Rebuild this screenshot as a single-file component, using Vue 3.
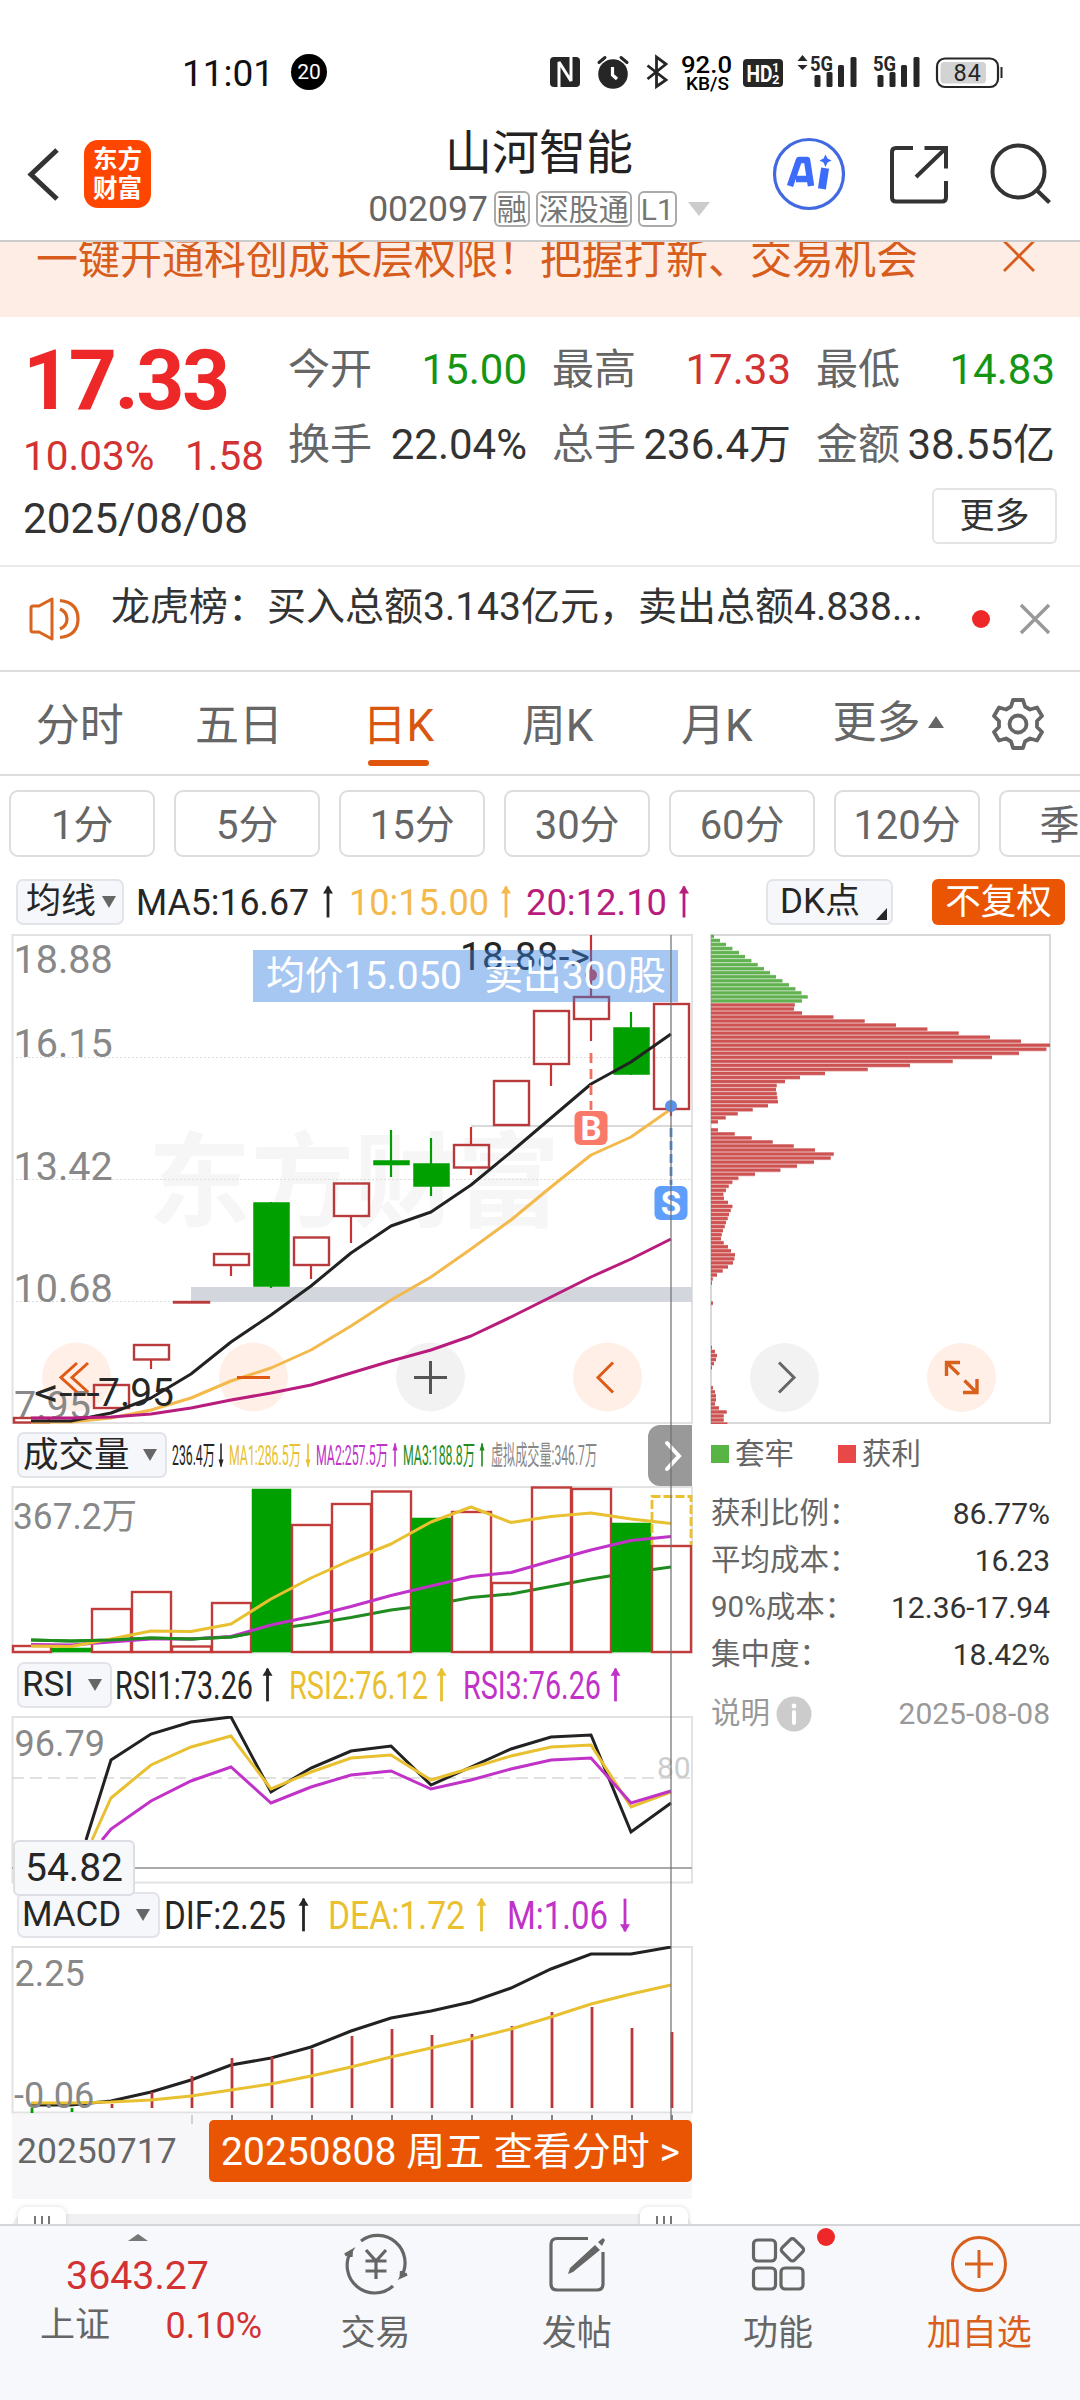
<script setup>
import { h } from "vue";

const stats = [
  { label: "今开", value: "15.00", tone: "down" },
  { label: "最高", value: "17.33", tone: "up" },
  { label: "最低", value: "14.83", tone: "down" },
  { label: "换手", value: "22.04%" },
  { label: "总手", value: "236.4万" },
  { label: "金额", value: "38.55亿" },
];

const tabs = ["分时", "五日", "日K", "周K", "月K"];
const periods = ["1分", "5分", "15分", "30分", "60分", "120分", "季K"];

const black = "#262626";
const gold = "#e8c030";
const purple = "#c032c8";
const green = "#1e8c1e";

const maValues = [
  { x: 136, w: 173, text: "MA5:16.67", color: black, arrow: 328, up: true },
  { x: 349, w: 140, text: "10:15.00", color: "#f3b94c", arrow: 506, up: true },
  { x: 526, w: 141, text: "20:12.10", color: "#b81c7c", arrow: 684, up: true },
];
const volValues = [
  { x: 172, w: 43, text: "236.4万", color: black, arrow: 221, up: false },
  { x: 229, w: 72, text: "MA1:286.5万", color: gold, arrow: 308, up: false },
  { x: 316, w: 72, text: "MA2:257.5万", color: purple, arrow: 395, up: true },
  { x: 403, w: 72, text: "MA3:188.8万", color: green, arrow: 482, up: true },
  { x: 491, w: 106, text: "虚拟成交量:346.7万", color: "#888" },
];
const rsiValues = [
  { x: 115, w: 138, text: "RSI1:73.26", color: black, arrow: 267.5, up: true },
  { x: 289, w: 139, text: "RSI2:76.12", color: gold, arrow: 441.5, up: true },
  { x: 463, w: 138, text: "RSI3:76.26", color: purple, arrow: 615.5, up: true },
];
const macdValues = [
  { x: 164, w: 122, text: "DIF:2.25", color: black, arrow: 303.5, up: true },
  { x: 328, w: 137, text: "DEA:1.72", color: gold, arrow: 481.5, up: true },
  { x: 507, w: 101, text: "M:1.06", color: purple, arrow: 625, up: false },
];

// row of indicator numbers, squeezed to the width they have
function Readout({ items, from, size = 36, head = 5 }) {
  const half = size * 0.43;
  return h(
    "svg",
    { width: 700 - from, height: 62, viewBox: `${from} -31 ${700 - from} 62` },
    items.flatMap((it) => {
      const nodes = [
        h(
          "text",
          {
            x: it.x,
            y: size * 0.37,
            fill: it.color,
            "font-size": size,
            textLength: it.w,
            lengthAdjust: "spacingAndGlyphs",
          },
          it.text
        ),
      ];
      if (it.arrow) {
        const s = it.up ? 1 : -1;
        const tip = -half * s;
        nodes.push(
          h("path", {
            d: `M${it.arrow} ${half}V${-half}`,
            stroke: it.color,
            "stroke-width": head > 4 ? 2.8 : 1.6,
          }),
          h("path", {
            d: `M${it.arrow - head} ${tip + 7 * s}L${it.arrow} ${tip - s}L${it.arrow + head} ${tip + 7 * s}Z`,
            fill: it.color,
          })
        );
      }
      return nodes;
    })
  );
}
Readout.props = ["items", "from", "size", "head"];

const cx = (i) => 31 + i * 40;
const line = (ys, from = 0) => ys.map((y, i) => `${cx(i + from)},${y}`).join(" ");

const candles = [
  { i: 0, top: 1418, bottom: 1422.5, high: 1418, low: 1422 },
  { i: 2, top: 1385, bottom: 1408, high: 1385, low: 1408 },
  { i: 3, top: 1345, bottom: 1359.5, high: 1345, low: 1369 },
  { i: 4, top: 1302, bottom: 1302.5, high: 1302, low: 1302 },
  { i: 5, top: 1254, bottom: 1265, high: 1254, low: 1276 },
  { i: 6, top: 1203, bottom: 1286, high: 1202, low: 1288, down: true },
  { i: 7, top: 1237.5, bottom: 1265, high: 1237, low: 1279 },
  { i: 8, top: 1183.5, bottom: 1216, high: 1183, low: 1243 },
  { i: 9, top: 1161, bottom: 1164.5, high: 1130, low: 1177, down: true },
  { i: 10, top: 1164, bottom: 1186, high: 1138, low: 1196, down: true },
  { i: 11, top: 1145, bottom: 1167.5, high: 1127, low: 1175 },
  { i: 12, top: 1081, bottom: 1125, high: 1081, low: 1125 },
  { i: 13, top: 1011, bottom: 1064, high: 1011, low: 1086 },
  { i: 14, top: 997, bottom: 1019, high: 935, low: 1041 },
  { i: 15, top: 1028, bottom: 1074, high: 1012, low: 1075, down: true },
  { i: 16, top: 1004, bottom: 1109, high: 1004, low: 1116 },
];

const ma5 = line([1421, 1421, 1413, 1398, 1374, 1342, 1315, 1286, 1253, 1226, 1212, 1185, 1152, 1118, 1084, 1062, 1034]);
const ma10 = line([1422, 1422, 1418, 1410, 1398, 1381, 1368, 1350, 1326, 1300, 1277, 1249, 1220, 1187, 1155, 1137, 1109]);
const ma20 = line([1418, 1418, 1417, 1414, 1408, 1400, 1393, 1385, 1373, 1361, 1350, 1336, 1317, 1297, 1277, 1259, 1239]);

const volTops = [1646, 1648, 1609, 1592, 1646.5, 1603, 1489, 1525, 1504, 1491.5, 1518, 1512, 1583, 1487.5, 1489, 1523, 1546];
const volDown = [1, 6, 10, 15];
const vol1 = line([1646, 1646.5, 1639, 1631, 1631.5, 1624, 1599, 1578, 1560, 1544, 1522, 1507, 1522.5, 1516.5, 1513, 1519, 1523.5]);
const vol2 = line([1644.5, 1645, 1642, 1639, 1639, 1636.5, 1625, 1616.5, 1606.5, 1595.5, 1586, 1576.5, 1572.5, 1561, 1550, 1540.5, 1536.5]);
const vol3 = line([1640, 1641, 1640, 1638, 1639, 1637, 1629.5, 1624, 1617.5, 1610, 1605, 1597.5, 1594, 1586.5, 1579, 1572.5, 1567]);

const rsi1 = "86,1840 " + line([1760, 1734, 1722, 1717, 1792, 1768, 1751, 1746, 1785, 1767, 1749, 1737, 1735, 1832, 1803], 2);
const rsi2 = "92,1840 " + line([1798, 1765, 1747, 1736, 1789, 1772, 1758, 1755, 1780, 1768, 1756, 1747, 1745, 1807, 1792], 2);
const rsi3 = "102,1840 " + line([1829, 1801, 1781, 1767, 1803, 1787, 1775, 1771, 1789, 1780, 1769, 1760, 1758, 1803, 1791], 2);

const dif = line([2105, 2105, 2101, 2092, 2080, 2065, 2058, 2047, 2031, 2018, 2011, 2002, 1988, 1969, 1954, 1954, 1947]);
const dea = line([2103, 2103, 2102, 2100, 2096, 2090, 2084, 2076, 2067, 2057, 2048, 2039, 2029, 2017, 2004, 1994, 1985]);
const macdTops = [2113, 2112, 2104, 2092, 2076, 2058, 2057, 2049, 2036, 2029, 2035, 2034, 2026, 2012, 2007, 2028, 2032];

// widths of the cost distribution bars, in thirds of a pixel
const chips = [
  9, 27, 45, 64, 84, 102, 121, 140, 159, 177, 195, 214, 234, 253, 271, 290, 273,
  251, 249, 273, 367, 461, 555, 649, 743, 837, 930, 1017, 1006, 924, 843, 725, 597, 470, 342, 267, 222,
  197, 195, 197, 199, 201, 171, 125, 80, 44, 21, 0, 21, 71, 122, 185, 248, 312, 368, 359, 309, 258, 208,
  132, 82, 64, 53, 45, 37, 39, 51, 64, 59, 54, 50, 45, 41, 36, 32, 30, 38, 51, 60, 72, 70, 66, 51, 35, 18, 5, 3,
  0, 0, 0, 0, 6, 0, 0, 0, 0, 0, 0, 0, 0, 0, 0, 3, 12, 18, 15, 9, 3, 0, 0, 0, 0, 6, 12, 15, 15, 12, 24, 47, 38, 38, 49,
];

const costs = [
  { label: "获利比例：", value: "86.77%" },
  { label: "平均成本：", value: "16.23" },
  { label: "90%成本：", value: "12.36-17.94" },
  { label: "集中度：", value: "18.42%" },
];
</script>

<template>
  <div class="page">
    <div class="status">
      <span class="time">11:01</span>
      <span class="count">20</span>
      <svg class="tray" width="460" height="44" viewBox="545 50 460 44">
        <rect x="550" y="57" width="30" height="30" rx="4" fill="#262626" />
        <path d="M555.500 60.500V84M555.500 61.500H559.500L570.500 81.500M574.500 83V59M570 82.500H566.500" fill="none" stroke="none" />
        <path d="M559 87V62L571 81V57" fill="none" stroke="#fff" stroke-width="3" stroke-linejoin="bevel" />
        <circle cx="613" cy="74" r="14.800" fill="#262626" />
        <path d="M599 62.500l6-5M627 62.500l-6-5" stroke="#262626" stroke-width="3" stroke-linecap="round" />
        <path d="M612.500 67v8l4.500 4" fill="none" stroke="#fff" stroke-width="3.200" />
        <path d="M647.500 65.500L666 80L656.500 86.500V57L666 64L647.500 79" fill="none" stroke="#262626" stroke-width="2.800" />
        <text x="681" y="73" font-size="24" font-weight="500" textLength="51" lengthAdjust="spacingAndGlyphs">92.0</text>
        <text x="686" y="90" font-size="19" font-weight="500" textLength="43" lengthAdjust="spacingAndGlyphs">KB/S</text>
        <rect x="743" y="59" width="40" height="28" rx="4" fill="#262626" />
        <text x="746.500" y="82" font-size="24" font-weight="700" fill="#fff" textLength="26" lengthAdjust="spacingAndGlyphs">HD</text>
        <text x="772" y="72" font-size="13" font-weight="700" fill="#fff">1</text>
        <text x="772" y="84" font-size="13" font-weight="700" fill="#fff">2</text>
        <path d="M797.500 61l5-6 5 6zM797.500 65l5 5 5-5z" fill="#262626" />
        <g v-for="sx in [0, 63]" :key="sx" fill="#262626">
          <text :x="810 + sx" y="70.500" font-size="21" font-weight="700" textLength="23" lengthAdjust="spacingAndGlyphs">5G</text>
          <rect :x="814.500 + sx" y="75" width="6" height="12" rx="1.500" />
          <rect :x="826.500 + sx" y="72" width="6" height="15" rx="1.500" />
          <rect :x="838 + sx" y="65" width="6" height="22" rx="1.500" />
          <rect :x="850.500 + sx" y="57" width="6" height="30" rx="1.500" />
        </g>
        <rect x="937" y="58.500" width="61" height="28.500" rx="8" fill="#fff" stroke="#262626" stroke-width="2.200" />
        <rect x="940.500" y="62" width="45.500" height="21.500" rx="4" fill="#d3d3d3" />
        <path d="M1001.500 67v11" stroke="#262626" stroke-width="2" />
        <text x="953.500" y="81" font-size="23.500" fill="#262626" textLength="27.500">84</text>
      </svg>
    </div>

    <header class="header">
      <div class="left">
        <svg width="34" height="60" viewBox="26 144 34 60">
          <path d="M57 150L31 174.500L57 199" fill="none" stroke="#333" stroke-width="5" />
        </svg>
        <div class="logo"><span>东方</span><span>财富</span></div>
      </div>
      <div class="title">
        <div class="name">山河智能</div>
        <div class="code">
          <span>002097</span>
          <em>融</em>
          <em>深股通</em>
          <em>L1</em>
          <i></i>
        </div>
      </div>
      <div class="right">
        <svg width="74" height="74" viewBox="771 137 74 74">
          <circle cx="808" cy="174" r="34.500" fill="#fff" stroke="#4169e1" stroke-width="3.200" />
          <path d="M789 186L798 160H806L810 186M795 179H807" fill="none" stroke="#3d6bfa" stroke-width="6.500" stroke-linejoin="round" />
          <path d="M823.500 172l-2 13" stroke="#3d6bfa" stroke-width="8" stroke-linecap="square" />
          <path d="M824.500 154.500l2 4 4 2-4 2-2 4.500-2-4.500-4-2 4-2z" fill="#3d6bfa" />
        </svg>
        <svg width="60" height="60" viewBox="886 144 60 60">
          <path d="M911 148H894q-4 0-4 4V197.500q0 4 4 4H940q4 0 4-4V181" fill="none" stroke="#333" stroke-width="4" />
          <path d="M922.500 148H944V168.500M943 149L914 177" fill="none" stroke="#333" stroke-width="4" />
        </svg>
        <svg width="62" height="62" viewBox="990 143 62 62">
          <circle cx="1018.500" cy="171.500" r="26" fill="none" stroke="#333" stroke-width="4" />
          <path d="M1036.500 190L1049.500 202.500" stroke="#333" stroke-width="4.200" />
        </svg>
      </div>
    </header>

    <div class="banner">
      <span>一键开通科创成长层权限！把握打新、交易机会</span>
      <svg width="34" height="34" viewBox="0 0 34 34">
        <path d="M2 2L32 32M32 2L2 32" stroke="#d85c1c" stroke-width="2.800" />
      </svg>
    </div>

    <section class="quote">
      <div class="price">
        <b>17.33</b>
        <div class="change"><span>10.03%</span><span>1.58</span></div>
      </div>
      <div class="stats">
        <div v-for="s in stats" :key="s.label" class="stat">
          <label>{{ s.label }}</label>
          <span :class="s.tone">{{ s.value }}</span>
        </div>
      </div>
      <div class="date">2025/08/08</div>
      <div class="more">更多</div>
    </section>

    <div class="notice">
      <svg width="56" height="48" viewBox="27 594 56 48">
        <path d="M31 607q0-2 2-2h6l13-7V638l-13-7h-6q-2 0-2-2z" fill="none" stroke="#d8641e" stroke-width="3" stroke-linejoin="round" />
        <path d="M60 608q7 3 7 10t-7 10M60 599.500q18 2 18 18.500t-18 18.500" fill="none" stroke="#d8641e" stroke-width="3.200" />
      </svg>
      <p>龙虎榜：买入总额3.143亿元，卖出总额4.838...</p>
      <i></i>
      <svg width="32" height="32" viewBox="0 0 32 32">
        <path d="M2 2L30 30M30 2L2 30" stroke="#999" stroke-width="3.400" />
      </svg>
    </div>

    <nav class="tabs">
      <div v-for="t in tabs" :key="t" :class="['tab', { active: t === '日K' }]">{{ t }}</div>
      <div class="tab-more">更多<i></i></div>
      <svg width="54" height="54" viewBox="-27 -27 54 54">
        <path
          d="M-5-24H5L7-17.500 12-14.500 19-16.500 24-8 19-3V3L24 8 19 16.500 12 14.500 7 17.500 5 24H-5L-7 17.500-12 14.500-19 16.500-24 8-19 3V-3L-24-8-19-16.500-12-14.500-7-17.500Z"
          fill="none"
          stroke="#666"
          stroke-width="3.800"
          stroke-linejoin="round"
        />
        <circle r="8.500" fill="none" stroke="#666" stroke-width="3.800" />
      </svg>
    </nav>

    <div class="periods">
      <div v-for="p in periods" :key="p" class="period">{{ p }}</div>
    </div>

    <div class="indicator main">
      <div class="picker ma">均线<i></i></div>
      <Readout :items="maValues" :from="124" :size="36" />
      <div class="picker dk">DK点<u></u></div>
      <div class="adjust">不复权</div>
    </div>

    <div class="board">
      <div class="charts">
        <svg width="700" height="490" viewBox="0 934 700 490">
          <text class="mark" x="148" y="1219" textLength="412">东方财富</text>
          <path d="M12 1057.500H692M12 1179.500H692M12 1301.500H692" stroke="#ddd" stroke-dasharray="2 2" />
          <rect x="12.500" y="935" width="679.500" height="488" class="frame" />
          <rect x="191" y="1287" width="501" height="15" fill="#d3d6dc" />
          <path d="M471 1126H692" stroke="#ccc" stroke-width="1.500" />
          <g fill="#ffefe6">
            <circle cx="76.500" cy="1377" r="34.500" />
            <circle cx="253.500" cy="1377" r="34.500" />
            <circle cx="430.500" cy="1377" r="34.500" fill="#f2f2f2" />
            <circle cx="607.500" cy="1377" r="34.500" />
          </g>
          <g class="scale" font-size="39.500">
            <text x="13.500" y="973">18.88</text>
            <text x="13.500" y="1057">16.15</text>
            <text x="13.500" y="1180">13.42</text>
            <text x="13.500" y="1302">10.68</text>
            <text x="14" y="1419">7.95</text>
          </g>
          <g v-for="c in candles" :key="c.i">
            <path
              :d="`M${cx(c.i)} ${c.high}V${c.top}M${cx(c.i)} ${c.bottom}V${c.low}`"
              :stroke="c.down ? '#009c00' : '#c83232'"
              stroke-width="2.200"
            />
            <rect
              :x="cx(c.i) - 17"
              :y="c.top"
              width="35"
              :height="c.bottom - c.top"
              :fill="c.down ? '#00a000' : 'none'"
              :stroke="c.down ? '#00a000' : '#b93a3a'"
              :stroke-width="c.down ? 1.5 : 2.4"
            />
          </g>
          <g fill="none" stroke-width="3" stroke-linejoin="round">
            <polyline :points="ma10" stroke="#f3b94c" />
            <polyline :points="ma5" stroke="#222" />
            <polyline :points="ma20" stroke="#b81c7c" />
          </g>
          <g fill="none" stroke="#e05a14" stroke-width="3">
            <path d="M77 1363L61 1377.500L77 1392M88 1363L72 1377.500L88 1392" />
            <path d="M237 1377.500H270" />
            <path d="M414 1377.500H447M430.500 1361V1394" stroke="#555" />
            <path d="M613 1362.500L598 1377.500L613 1392.500" />
          </g>
          <text x="34" y="1406" font-size="39" :fill="black" textLength="66" lengthAdjust="spacingAndGlyphs">&lt;---</text>
          <text x="98" y="1406" font-size="39" :fill="black">7.95</text>
          <text x="460" y="970" font-size="38.500" :fill="black" textLength="130">18.88-&gt;</text>
          <circle cx="591" cy="975" r="6" fill="#e04040" />
          <rect x="253" y="950" width="425" height="52" fill="#3380e1" fill-opacity="0.44" />
          <g font-size="39" fill="#fff">
            <text x="266" y="989" textLength="196">均价15.050</text>
            <text x="484" y="989" textLength="182">卖出300股</text>
          </g>
          <path d="M591 1053V1110" stroke="#f0705f" stroke-width="2.800" stroke-dasharray="10 6" />
          <rect x="574.500" y="1111" width="33" height="34" rx="6" fill="#f97a68" />
          <text class="badge" x="591" y="1140">B</text>
          <path d="M671 1128V1185" stroke="#4f8fe8" stroke-width="2.800" stroke-dasharray="9 4" />
          <rect x="654.500" y="1186" width="33" height="34" rx="6" fill="#5f9efb" />
          <text class="badge" x="671" y="1215">S</text>
          <circle cx="671" cy="1106" r="6" fill="#5a93ea" />
        </svg>

        <div class="indicator">
          <div class="picker vol">成交量<i></i></div>
          <Readout :items="volValues" :from="167" :size="27" :head="2.5" />
        </div>
        <svg width="700" height="168" viewBox="0 1486 700 168">
          <rect x="12.500" y="1487" width="679.500" height="165.500" class="frame" />
          <text class="scale" x="13" y="1529" font-size="36.500" textLength="124" lengthAdjust="spacingAndGlyphs">367.2万</text>
          <polyline :points="vol3" fill="none" :stroke="green" stroke-width="3" />
          <rect
            v-for="(top, i) in volTops"
            :key="i"
            :x="i ? 12 + i * 40 : 13"
            :y="top"
            :width="i ? 39 : 38"
            :height="1652 - top"
            :fill="volDown.includes(i) ? '#00a000' : 'none'"
            :stroke="volDown.includes(i) ? '#00a000' : '#c23c3c'"
            :stroke-width="volDown.includes(i) ? 0.5 : 2.4"
          />
          <path d="M652 1545V1496.500H691V1545" fill="none" stroke="#e8c030" stroke-width="2.800" stroke-dasharray="9 3" />
          <g fill="none" stroke-width="3" stroke-linejoin="round">
            <polyline :points="vol2" :stroke="purple" />
            <polyline :points="vol1" :stroke="gold" />
            <path d="M31 1640L71 1641L111 1640L151 1638L191 1639L231 1637L250 1633.500" :stroke="green" />
          </g>
        </svg>

        <div class="indicator">
          <div class="picker rsi">RSI<i></i></div>
          <Readout :items="rsiValues" :from="112" :size="38" />
        </div>
        <svg width="700" height="168" viewBox="0 1716 700 168">
          <rect x="12.500" y="1717" width="679.500" height="165.500" class="frame" />
          <path d="M12 1778H692" stroke="#d8d8d8" stroke-width="1.500" stroke-dasharray="12 6" />
          <path d="M12 1868H692" stroke="#aaa" stroke-width="2" />
          <text class="scale" x="14.500" y="1756" font-size="36">96.79</text>
          <text x="657" y="1778" font-size="30" fill="#ccc">80</text>
          <g fill="none" stroke-width="3">
            <polyline :points="rsi1" stroke="#222" />
            <polyline :points="rsi2" :stroke="gold" />
            <polyline :points="rsi3" :stroke="purple" />
          </g>
        </svg>

        <div class="indicator">
          <div class="picker macd">MACD<i></i></div>
          <Readout :items="macdValues" :from="160" :size="38" />
        </div>
        <svg width="700" height="168" viewBox="0 1946 700 168">
          <rect x="12.500" y="1947" width="679.500" height="165.500" class="frame" />
          <polyline :points="dif" fill="none" stroke="#222" stroke-width="3" />
          <path
            v-for="(top, i) in macdTops"
            :key="i"
            :d="`M${cx(i) + 1} 2108V${top}`"
            :stroke="i < 2 ? '#009c00' : '#b93a3a'"
            stroke-width="2.800"
          />
          <polyline :points="dea" fill="none" :stroke="gold" stroke-width="3" />
          <g class="scale" font-size="36">
            <text x="14.500" y="1986">2.25</text>
            <text x="14" y="2108">-0.06</text>
          </g>
        </svg>

        <div class="axis">
          <span>20250717</span>
          <div class="day">20250808 周五 查看分时 &gt;</div>
          <svg width="520" height="9" viewBox="180 2115 520 9">
            <path v-for="i in 13" :key="i" :d="`M${cx(i + 3) + 1} 2115v${i > 1 ? 5 : 9}`" :stroke="i > 1 ? '#777' : '#ccc'" stroke-width="1.800" />
          </svg>
        </div>
        <div class="slider">
          <div class="handle"><i></i><i></i><i></i></div>
          <div class="handle"><i></i><i></i><i></i></div>
        </div>

        <div class="fold">
          <svg width="20" height="32" viewBox="0 0 20 32">
            <path d="M3 3L15 16L3 29" fill="none" stroke="#fff" stroke-width="4" stroke-linecap="round" />
          </svg>
        </div>
        <div class="cross"></div>
        <div class="level">54.82</div>
      </div>

      <aside class="chips">
        <svg width="380" height="490" viewBox="700 934 380 490">
          <rect x="711" y="935" width="339" height="488" fill="none" stroke="#ccc" stroke-width="1.500" />
          <g v-for="(w, i) in chips" :key="i" :fill="i < 17 ? '#62b150' : '#cd5252'">
            <rect x="711" :y="934.5 + i * 4.03" :width="w / 3" height="4" fill-opacity="0.5" />
            <rect x="711" :y="935 + i * 4.03" :width="w / 3" height="2.800" />
          </g>
          <circle cx="784.500" cy="1377.500" r="34.500" fill="#f2f2f2" />
          <path d="M779 1362.500L794 1377.500L779 1392.500" fill="none" stroke="#666" stroke-width="3" />
          <circle cx="961.500" cy="1377.500" r="34.500" fill="#ffefe6" />
          <path d="M960 1362.500H946.500V1376M947 1363L959 1374.500M963 1392.500H977V1379M976 1392L964.500 1380.500" fill="none" stroke="#d8601c" stroke-width="3.400" />
        </svg>
        <div class="legend">
          <span><i class="loss"></i>套牢</span>
          <span><i class="gain"></i>获利</span>
        </div>
        <div v-for="c in costs" :key="c.label" class="cost">
          <span>{{ c.label }}</span>
          <b>{{ c.value }}</b>
        </div>
        <div class="explain">
          <span>说明</span>
          <svg width="36" height="36" viewBox="0 0 36 36">
            <circle cx="18" cy="18" r="17.500" fill="#ccc" />
            <path d="M18 16v11" stroke="#fff" stroke-width="4" stroke-linecap="round" />
            <circle cx="18" cy="10" r="2.400" fill="#fff" />
          </svg>
          <b>2025-08-08</b>
        </div>
      </aside>
    </div>

    <footer class="footer">
      <div class="index">
        <i></i>
        <b>3643.27</b>
        <div><span>上证</span><em>0.10%</em></div>
      </div>
      <div class="item">
        <svg width="70" height="64" viewBox="-35 -32 70 64">
          <g fill="none" stroke="#666" stroke-width="3.200">
            <path d="M-15-23A27.500 27.500 0 0 1 25.500 12.500L31 10M25 13.500L25.500 7" />
            <path d="M17 22A27.500 27.500 0 0 1-25-12.500L-31-9M-24.500-14L-25-7" />
            <path d="M-10-14L0-3L10-14M-10.500-3H10.500M-10.500 7H10.500M0-3V15" />
          </g>
        </svg>
        <span>交易</span>
      </div>
      <div class="item">
        <svg width="70" height="64" viewBox="-35 -32 70 64">
          <path d="M11-25.500H-20q-6 0-6 6V20q0 6 6 6H20q6 0 6-6V-12" fill="none" stroke="#666" stroke-width="3.200" />
          <path d="M21-22l5-4 2 2-3 6zM18-19l5 5L-4 8l-5 2 2-6z" fill="#666" />
        </svg>
        <span>发帖</span>
      </div>
      <div class="item">
        <svg width="70" height="64" viewBox="-35 -32 70 64">
          <g fill="none" stroke="#666" stroke-width="3.200">
            <rect x="-24.500" y="-24" width="22" height="21" rx="4" />
            <rect x="-24.500" y="4" width="22" height="21" rx="4" />
            <rect x="3" y="4" width="22" height="21" rx="4" />
            <rect x="5.500" y="-23" width="17.500" height="17.500" rx="3" transform="rotate(45 14.250 -14)" />
          </g>
        </svg>
        <span>功能</span>
        <i class="dot"></i>
      </div>
      <div class="item add">
        <svg width="70" height="64" viewBox="-35 -32 70 64">
          <circle r="26.500" fill="none" stroke="#d8601c" stroke-width="3" />
          <path d="M-14 0H14M0-14V14" stroke="#d8601c" stroke-width="3" />
        </svg>
        <span>加自选</span>
      </div>
    </footer>
  </div>
</template>

<style>
body {
  margin: 0;
  background: #fff;
}
</style>

<style scoped>
.page {
  width: 1080px;
  height: 2400px;
  overflow: hidden;
  display: flex;
  flex-direction: column;
  background: #fff;
  color: #333;
  font-family: Roboto, "Noto Sans CJK SC", sans-serif;
  white-space: nowrap;
}
.page * {
  box-sizing: border-box;
}
.page > * {
  flex-shrink: 0;
}
svg {
  display: block;
  flex-shrink: 0;
}
i,
em {
  font-style: normal;
}

.status {
  height: 126px;
  padding: 20px 75px 0 182px;
  display: flex;
  align-items: center;
  color: #111;
}
.time {
  font-size: 37px;
  width: 109px;
}
.count {
  width: 36px;
  height: 36px;
  margin-top: -2px;
  border-radius: 50%;
  background: #000;
  color: #fff;
  font-size: 21px;
  line-height: 37px;
  text-align: center;
}
.tray {
  margin-left: auto;
  margin-top: -2px;
}

.header {
  height: 116px;
  padding: 0 28px 0 26px;
  display: grid;
  grid-template-columns: 1fr auto 1fr;
  border-bottom: 2px solid #ccc;
}
.left,
.right {
  height: 96px;
  display: flex;
  align-items: center;
}
.left {
  gap: 24px;
}
.right {
  justify-content: flex-end;
  gap: 42px;
}
.logo {
  width: 67px;
  height: 68px;
  border-radius: 14px;
  background: #ff4600;
  color: #fff;
  font-size: 24.5px;
  font-weight: 700;
  line-height: 29px;
  display: flex;
  flex-direction: column;
  align-items: center;
  justify-content: center;
}
.name {
  margin-top: 1px;
  font-size: 47px;
  line-height: 52px;
  text-align: center;
  color: #222;
}
.code {
  margin-top: 12px;
  display: flex;
  align-items: center;
  gap: 6px;
  font-size: 35.5px;
  line-height: 36px;
  color: #666;
}
.code em {
  height: 36px;
  padding: 0 1px;
  border: 2px solid #aaa;
  border-radius: 6px;
  font-size: 30px;
  line-height: 33px;
  color: #777;
}
.code i {
  margin-left: 5px;
  border: 11px solid transparent;
  border-top: 14px solid #ccc;
  border-bottom: 0;
}

.banner {
  height: 75px;
  padding: 0 44px 0 36px;
  display: flex;
  justify-content: space-between;
  overflow: hidden;
  background: #fdede4;
}
.banner span {
  margin-top: -7px;
  font-size: 42px;
  line-height: 50px;
  color: #d85c1c;
}
.banner svg {
  margin-top: -3px;
}

.quote {
  height: 250px;
  display: grid;
  grid-template-columns: 288px 1fr;
  grid-template-rows: 163px 1fr;
  border-bottom: 2px solid #eaeaea;
}
.price {
  padding: 14px 0 0 23px;
}
.price b {
  display: block;
  font-size: 84px;
  font-weight: 700;
  line-height: 100px;
  letter-spacing: -2.5px;
  color: #ee2828;
}
.change {
  width: 241px;
  margin-top: 2px;
  display: flex;
  justify-content: space-between;
  font-size: 40.5px;
  line-height: 46px;
  color: #d23232;
}
.stats {
  padding: 31px 25px 0 0;
  display: grid;
  grid-template-columns: repeat(3, 239px);
  grid-template-rows: 44px 44px;
  column-gap: 25px;
  row-gap: 31px;
}
.stat {
  display: flex;
  justify-content: space-between;
  font-size: 42px;
  line-height: 44px;
}
.stat label {
  color: #666;
}
.up {
  color: #d23232;
}
.down {
  color: #149614;
}
.date {
  padding: 16px 0 0 23px;
  font-size: 42.3px;
  line-height: 46px;
}
.more {
  justify-self: end;
  width: 125px;
  height: 56px;
  margin: 8px 23px 0 0;
  border: 2px solid #e4e4e4;
  border-radius: 6px;
  font-size: 35px;
  line-height: 54px;
  text-align: center;
}

.notice {
  height: 105px;
  padding-left: 27px;
  display: flex;
  align-items: center;
  border-bottom: 2px solid #ddd;
}
.notice p {
  width: 861px;
  margin: -23px 0 0 28px;
  font-size: 39px;
  line-height: 46px;
}
.notice i {
  width: 18px;
  height: 18px;
  margin-right: 29px;
  border-radius: 50%;
  background: #ee2828;
}

.tabs {
  height: 104px;
  display: flex;
  align-items: center;
  border-bottom: 2px solid #ddd;
  font-size: 44px;
  line-height: 108px;
  color: #666;
}
.tab {
  width: 159.3px;
  height: 102px;
  position: relative;
  text-align: center;
}
.active {
  color: #d8560f;
}
.active::after {
  content: "";
  position: absolute;
  left: 49px;
  bottom: 8px;
  width: 61px;
  height: 6px;
  border-radius: 3px;
  background: #e0560c;
}
.tab-more {
  width: 155px;
  height: 102px;
  padding-left: 36px;
  display: flex;
  align-items: center;
}
.tab-more i {
  margin: -2px 0 0 8px;
  border: 8px solid transparent;
  border-bottom: 12px solid #666;
  border-top: 0;
}
.tabs svg {
  margin: 1px 0 0 40px;
}

.periods {
  height: 94px;
  padding: 14px 0 0 9px;
  display: flex;
  gap: 18.6px;
  overflow: hidden;
}
.period {
  flex: none;
  width: 146.4px;
  height: 67px;
  border: 2px solid #ddd;
  border-radius: 9px;
  font-size: 40px;
  line-height: 67px;
  text-align: center;
  color: #666;
}

.indicator {
  height: 62px;
  padding-left: 17px;
  display: flex;
  align-items: center;
}
.main {
  height: 64px;
  padding-left: 16px;
}
.picker {
  flex: none;
  height: 46px;
  padding: 0 8px 0 7px;
  display: flex;
  align-items: center;
  justify-content: space-between;
  border: 2px solid #e2e4e9;
  border-radius: 7px;
  background: #f6f7fa;
  font-size: 35px;
  line-height: 44px;
  color: #262626;
}
.picker i {
  border: 7px solid transparent;
  border-top: 12px solid #666;
  border-bottom: 0;
}
.picker.ma {
  width: 108px;
  padding-left: 8px;
  padding-right: 6px;
}
.picker.vol {
  width: 150px;
  padding-left: 4px;
  font-size: 35.5px;
}
.picker.rsi {
  width: 95px;
  padding-left: 3px;
}
.picker.macd {
  width: 143px;
  padding-left: 3px;
}
.picker.dk {
  width: 127px;
  margin-left: 66px;
  padding-right: 4px;
  padding-left: 12px;
}
.dk u {
  margin-top: 24px;
  border-left: 11px solid transparent;
  border-bottom: 12px solid #262626;
}
.adjust {
  width: 133px;
  height: 46px;
  margin-left: 39px;
  border-radius: 6px;
  background: #ea5504;
  color: #fff;
  font-size: 35.5px;
  line-height: 46px;
  text-align: center;
}

.board {
  height: 1290px;
  display: flex;
  overflow: hidden;
}
.charts {
  width: 700px;
  position: relative;
}
.frame {
  fill: none;
  stroke: #e2e2e2;
  stroke-width: 2;
}
.scale {
  fill: #888;
}
.mark {
  font-size: 103px;
  font-weight: 700;
  fill: #f6f6f7;
}
.badge {
  font-size: 33px;
  font-weight: 700;
  fill: #fff;
  text-anchor: middle;
}
.axis {
  width: 680px;
  height: 85px;
  margin-left: 12px;
  display: flex;
  justify-content: space-between;
  position: relative;
  background: #f7f7fa;
}
.axis span {
  padding-left: 5px;
  font-size: 35.5px;
  line-height: 75px;
  color: #666;
}
.axis svg {
  position: absolute;
  left: 168px;
  top: 1px;
}
.day {
  width: 483px;
  height: 62px;
  margin-top: 6px;
  border-radius: 5px;
  background: #ea5504;
  color: #fff;
  font-size: 39px;
  line-height: 64px;
  text-align: center;
}
.slider {
  height: 40px;
  margin: 15px 8px 0 12px;
  padding: 0 4px 0 6px;
  display: flex;
  justify-content: space-between;
  border-radius: 14px;
  background: #f1f1f4;
}
.handle {
  width: 48px;
  height: 50px;
  margin-top: -7px;
  padding-top: 9px;
  display: flex;
  justify-content: center;
  gap: 5px;
  border-radius: 8px;
  background: #fff;
  box-shadow: 0 0 5px rgba(0, 0, 0, 0.15);
}
.handle i {
  width: 2px;
  height: 30px;
  background: #777;
}
.fold {
  position: absolute;
  left: 648px;
  top: 491px;
  width: 44px;
  height: 61px;
  padding: 15px 0 0 16px;
  border-radius: 12px 0 0 12px;
  background: #999;
}
.cross {
  position: absolute;
  left: 670px;
  top: 1px;
  width: 2px;
  height: 1185px;
  background: rgba(110, 110, 110, 0.6);
}
.level {
  position: absolute;
  left: 13px;
  top: 906px;
  width: 122px;
  height: 56px;
  border: 2px solid #dcdee3;
  border-radius: 6px;
  background: #f7f8fa;
  font-size: 39px;
  line-height: 53px;
  text-align: center;
  color: #262626;
}

.chips {
  width: 380px;
}
.legend {
  height: 60px;
  padding-left: 11px;
  display: flex;
  gap: 44px;
  font-size: 29.5px;
  line-height: 61px;
  color: #666;
}
.legend span {
  display: flex;
  align-items: center;
}
.legend i {
  width: 18px;
  height: 18px;
  margin-right: 6px;
}
.loss {
  background: #58b444;
}
.gain {
  background: #e84848;
}
.cost,
.explain {
  height: 47px;
  padding: 0 30px 0 11px;
  display: flex;
  justify-content: space-between;
  align-items: center;
  font-size: 29.5px;
  line-height: 47px;
  color: #666;
}
.legend + .cost {
  margin-top: 6px;
}
.cost b {
  font-size: 30px;
  font-weight: 400;
  color: #333;
}
.explain {
  margin-top: 12px;
  color: #999;
}
.explain b {
  margin-left: auto;
  font-size: 30px;
  font-weight: 400;
}
.explain svg {
  margin-left: 6px;
}

.footer {
  height: 176px;
  display: flex;
  border-top: 2px solid #d4d6da;
  background: #f7f8fb;
}
.index {
  width: 275px;
  padding: 8px 0 0 0;
  display: flex;
  flex-direction: column;
  align-items: center;
  color: #d23232;
}
.index > i {
  border: 10px solid transparent;
  border-bottom: 7px solid #777;
  border-top: 0;
}
.index b {
  margin-top: 12px;
  font-size: 39.3px;
  font-weight: 400;
  line-height: 46px;
}
.index div {
  width: 222px;
  margin: 4px 13px 0 0;
  align-self: flex-end;
  display: flex;
  justify-content: space-between;
  font-size: 36px;
  line-height: 46px;
}
.index span {
  font-size: 35px;
  color: #666;
}
.item {
  width: 201.2px;
  padding-top: 6px;
  position: relative;
  display: flex;
  flex-direction: column;
  align-items: center;
  font-size: 35px;
  line-height: 46px;
  color: #666;
}
.item span {
  margin-top: 15px;
}
.dot {
  position: absolute;
  left: 140px;
  top: 2px;
  width: 18px;
  height: 18px;
  border-radius: 50%;
  background: #ee2828;
}
.add {
  color: #d8601c;
}
</style>
